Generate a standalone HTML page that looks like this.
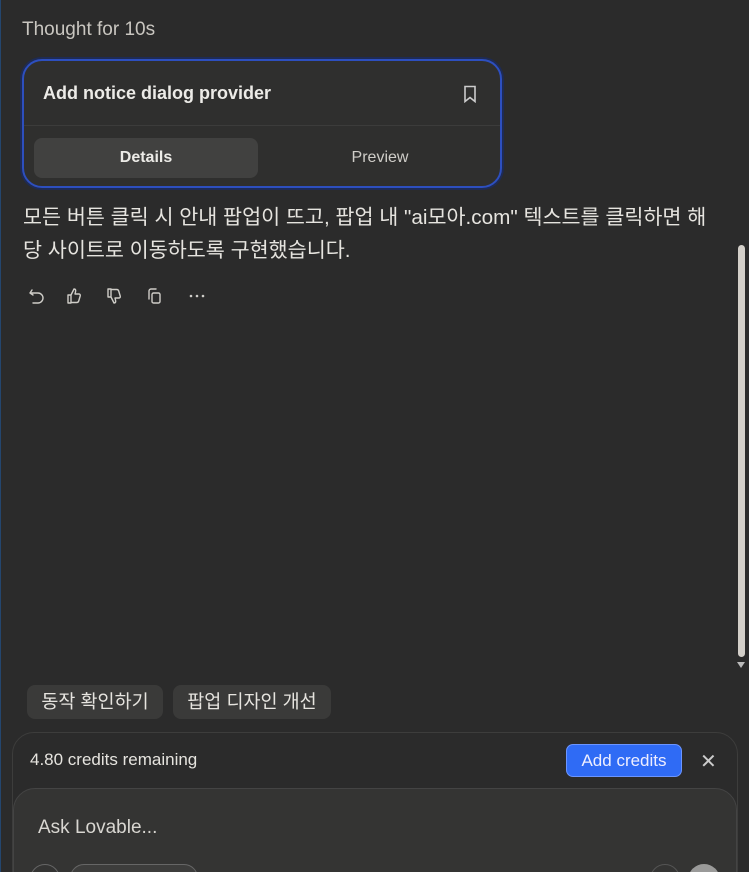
<!DOCTYPE html>
<html style="overflow:hidden;height:872px"><head><meta charset="utf-8"><style>
*{box-sizing:border-box;margin:0;padding:0}
body{width:749px;height:872px;overflow:hidden;background:#2b2b2b;font-family:"Liberation Sans","Noto Sans CJK KR",sans-serif;color:#e6e4df;position:relative}
.edge{position:absolute;left:0;top:0;width:1px;height:872px;background:#24466e}
.t{position:absolute;left:22px;top:19px;font-size:19px;color:#c9c6c0}
.card{position:absolute;left:22px;top:59px;width:480px;height:129px;border:2px solid #2d4fbf;border-radius:20px;background:#2f2f2e;box-shadow:0 0 0 2px #1e2b55}
.card h3{position:absolute;left:19px;top:22px;font-size:18px;font-weight:bold;color:#ecebe7}
.sep{position:absolute;left:0;right:0;top:64px;height:1px;background:#3c3c3b}
.tab{position:absolute;top:77px;height:40px;border-radius:8px;font-size:16px;text-align:center;line-height:40px}
.msg{position:absolute;left:23px;top:201px;font-size:20.7px;line-height:33px;color:#e6e4df;width:720px;white-space:nowrap}
.chip{position:absolute;top:685px;height:34px;border-radius:8px;background:#3a3a39;font-size:18.5px;line-height:34px;text-align:center;color:#e6e4df}
.cr{position:absolute;left:12px;top:732px;width:726px;height:160px;border:1px solid #3d3d3c;border-radius:22px;background:#2b2b2b}
.inp{position:absolute;left:13px;top:788px;width:724px;height:110px;border:1px solid #444;border-radius:22px;background:#343433}
.btn{position:absolute;left:566px;top:744px;width:116px;height:33px;border-radius:7px;background:#2f6bf5;border:1px solid #6b95ff;font-size:17px;line-height:31px;text-align:center;color:#eef}
.clip{position:absolute;left:0;top:0;width:749px;height:872px;overflow:hidden}
</style></head><body><div class="clip">
<div class="edge"></div>
<div class="t">Thought for 10s</div>
<div class="card"><h3>Add notice dialog provider</h3>
<svg style="position:absolute;left:438px;top:24px" width="16" height="18" viewBox="0 0 16 18" fill="none" stroke="#ccc" stroke-width="1.6"><path d="M3 1.5h10v15l-5-4-5 4z"/></svg>
<div class="sep"></div>
<div class="tab" style="left:10px;width:224px;background:#414140;font-weight:bold;color:#ecebe7">Details</div>
<div class="tab" style="left:244px;width:224px;color:#cfcdc8">Preview</div>
</div>
<div class="msg">모든 버튼 클릭 시 안내 팝업이 뜨고, 팝업 내 "ai모아.com" 텍스트를 클릭하면 해<br>당 사이트로 이동하도록 구현했습니다.</div>
<svg style="position:absolute;left:28px;top:286px" width="185" height="20" viewBox="0 0 185 20" fill="none" stroke="#cfcdc8" stroke-width="1.4" stroke-linecap="round" stroke-linejoin="round">
<path d="M4 4l-2 3 3 2M2 7h8a5 5 0 0 1 0 10H5"/>
<path d="M43 9v8h-3V9zM43 9l3-6c1.5 0 2 1 1.5 3l-.5 2h4c1 0 1.5 1 1.2 2l-1.5 5c-.3 1-1 1.5-2 1.5H43"/>
<path d="M83 11V3h-3v8zM83 11l3 6c1.5 0 2-1 1.5-3l-.5-2h4c1 0 1.5-1 1.2-2l-1.5-5c-.3-1-1-1.5-2-1.5H83"/>
<rect x="124" y="7" width="8" height="10" rx="1.5"/><path d="M121 13V5a2 2 0 0 1 2-2h5"/>
<circle cx="163" cy="10" r=".6" fill="#cfcdc8"/><circle cx="169" cy="10" r=".6" fill="#cfcdc8"/><circle cx="175" cy="10" r=".6" fill="#cfcdc8"/>
</svg>
<div style="position:absolute;left:738px;top:245px;width:7px;height:412px;border-radius:4px;background:#d3cfc9"></div>
<div style="position:absolute;left:737px;top:662px;width:0;height:0;border-left:4px solid transparent;border-right:4px solid transparent;border-top:6px solid #bbb"></div>
<div class="chip" style="left:27px;width:136px">동작 확인하기</div>
<div class="chip" style="left:173px;width:158px">팝업 디자인 개선</div>
<div class="cr"></div>
<div style="position:absolute;left:30px;top:750px;font-size:17px;color:#e6e4df">4.80 credits remaining</div>
<div class="btn">Add credits</div>
<div style="position:absolute;left:700px;top:749px;font-size:20px;color:#ccc">✕</div>
<div class="inp"></div>
<div style="position:absolute;left:38px;top:817px;font-size:19px;color:#d8d6d1">Ask Lovable...</div>
<div style="position:absolute;left:30px;top:864px;width:30px;height:30px;border-radius:50%;border:1px solid #666"></div>
<div style="position:absolute;left:70px;top:864px;width:128px;height:30px;border-radius:14px;border:1px solid #666;background:#3d3d3c"></div>
<div style="position:absolute;left:650px;top:864px;width:30px;height:30px;border-radius:50%;border:1px solid #555"></div>
<div style="position:absolute;left:688px;top:864px;width:32px;height:32px;border-radius:50%;background:#9a9a99"></div>
</div></body></html>
